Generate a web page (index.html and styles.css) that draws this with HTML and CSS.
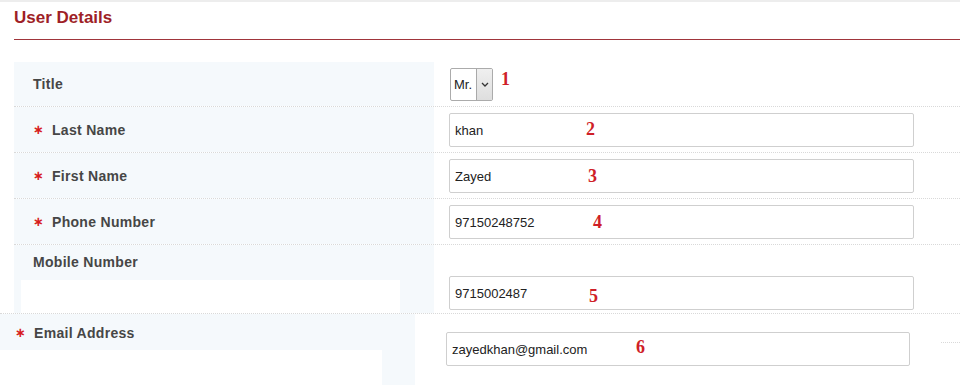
FILE: index.html
```html
<!DOCTYPE html>
<html lang="en">
<head>
<meta charset="utf-8">
<title>User Details</title>
<link rel="stylesheet" href="styles.css">
</head>
<body>
  <h2 class="section-title">User Details</h2>
  <div class="form">
    <div class="row">
      <div class="label"><span class="label-text">Title</span></div>
      <div class="field">
        <div class="select-wrap">
          <select class="select"><option>Mr.</option><option>Mrs.</option><option>Ms.</option></select>
          <span class="select-btn"><svg width="8" height="5" viewBox="0 0 8 5"><polyline points="1,1 4,4 7,1" fill="none" stroke="#333" stroke-width="1.3"/></svg></span>
        </div>
        <span class="mark mark-1">1</span>
      </div>
    </div>
    <div class="row">
      <div class="label"><span class="req">&#8727;</span><span class="label-text">Last Name</span></div>
      <div class="field">
        <input class="input" type="text" value="khan">
        <span class="mark mark-2">2</span>
      </div>
    </div>
    <div class="row">
      <div class="label"><span class="req">&#8727;</span><span class="label-text">First Name</span></div>
      <div class="field">
        <input class="input" type="text" value="Zayed">
        <span class="mark mark-3">3</span>
      </div>
    </div>
    <div class="row">
      <div class="label"><span class="req">&#8727;</span><span class="label-text">Phone Number</span></div>
      <div class="field">
        <input class="input" type="text" value="97150248752">
        <span class="mark mark-4">4</span>
      </div>
    </div>
    <div class="row row-mobile">
      <div class="label label-stack">
        <span class="label-text">Mobile Number</span>
        <div class="label-blank"></div>
      </div>
      <div class="field field-mobile">
        <input class="input" type="text" value="9715002487">
        <span class="mark mark-5">5</span>
      </div>
    </div>
    <div class="row row-email">
      <div class="label label-stack label-email">
        <span class="label-line"><span class="req">&#8727;</span><span class="label-text">Email Address</span></span>
        <div class="label-blank label-blank-email"></div>
      </div>
      <div class="field field-email">
        <input class="input input-email" type="text" value="zayedkhan@gmail.com">
        <span class="trail"></span>
        <span class="mark mark-6">6</span>
      </div>
    </div>
  </div>
</body>
</html>
```

FILE: styles.css
```css
html, body {
  margin: 0;
  padding: 0;
  background: #ffffff;
}

body {
  font-family: "Liberation Sans", Arial, sans-serif;
  border-top: 2px solid #ededed;
  height: 383px;
  overflow: hidden;
}

.section-title {
  margin: 0 0 22px 14px;
  padding: 6px 0 11px;
  font-size: 17px;
  line-height: 20px;
  font-weight: bold;
  color: #9e1f27;
  border-bottom: 1px solid #a0353b;
}

.row {
  display: grid;
  grid-template-columns: 420px 1fr;
  margin-left: 14px;
  border-bottom: 1px dotted #d9d9d9;
}

.label {
  display: flex;
  align-items: center;
  padding-left: 19px;
  background: #f5f9fc;
  font-size: 14px;
  font-weight: bold;
  color: #464646;
}

.label-text {
  line-height: 16px;
  letter-spacing: 0.3px;
}

.req {
  display: inline-block;
  width: 19px;
  font-family: "DejaVu Sans", sans-serif;
  font-size: 13px;
  font-weight: bold;
  color: #d71d1d;
  line-height: 16px;
}

.field {
  position: relative;
  display: flex;
  align-items: flex-start;
  padding: 6px 0 5px 15px;
}

.input {
  box-sizing: border-box;
  width: 465px;
  height: 34px;
  margin: 0;
  padding: 0 5px;
  border: 1px solid #cfcfcf;
  border-radius: 2px;
  background: #fff;
  font-family: "Liberation Sans", Arial, sans-serif;
  font-size: 13px;
  color: #222;
  outline: none;
}

.select-wrap {
  position: relative;
  margin-left: 1px;
  width: 43px;
  height: 33px;
}

.select {
  -webkit-appearance: none;
  appearance: none;
  box-sizing: border-box;
  width: 43px;
  height: 33px;
  margin: 0;
  padding: 0 0 0 3px;
  border: 1px solid #ababab;
  border-radius: 2px;
  background: #fff;
  font-family: "Liberation Sans", Arial, sans-serif;
  font-size: 13px;
  color: #222;
  outline: none;
}

.select-btn {
  position: absolute;
  top: 1px;
  right: 1px;
  bottom: 1px;
  width: 16px;
  box-sizing: border-box;
  border-left: 1px solid #a9a9a9;
  background: linear-gradient(#efefef, #dedede);
  display: flex;
  align-items: center;
  justify-content: center;
  pointer-events: none;
}

.mark {
  position: absolute;
  font-family: "Liberation Serif", "Times New Roman", serif;
  font-weight: bold;
  font-size: 18px;
  line-height: 18px;
  color: #cf1f28;
}

.mark-1 { left: 67px; top: 8px; }
.mark-2 { left: 152px; top: 13px; }
.mark-3 { left: 154px; top: 14px; }
.mark-4 { left: 159px; top: 14px; }
.mark-5 { left: 155px; top: 42px; }
.mark-6 { left: 221px; top: 24px; }

.row-mobile {
  border-bottom: none;
}

.label-stack {
  flex-direction: column;
  align-items: stretch;
  padding-top: 9px;
}

.label-blank {
  margin: 10px 0 0 -12px;
  width: 379px;
  height: 33px;
  background: #ffffff;
}

.field-mobile {
  padding: 31px 0 3px 15px;
}

.row-email {
  margin-left: 0;
  grid-template-columns: 415px 1fr;
  border-bottom: none;
  border-top: 1px dotted #d9d9d9;
  height: 80px;
}

.label-email {
  padding-left: 15px;
  padding-top: 11px;
}

.label-line {
  display: flex;
  align-items: center;
}

.label-blank-email {
  margin: 9px 0 0 -15px;
  width: 382px;
  height: 40px;
}

.field-email {
  padding: 18px 0 0 31px;
}

.input-email {
  width: 464px;
}

.trail {
  flex: 1;
  margin: 10px 0 0 31px;
  border-top: 1px dotted #d9d9d9;
}
```
